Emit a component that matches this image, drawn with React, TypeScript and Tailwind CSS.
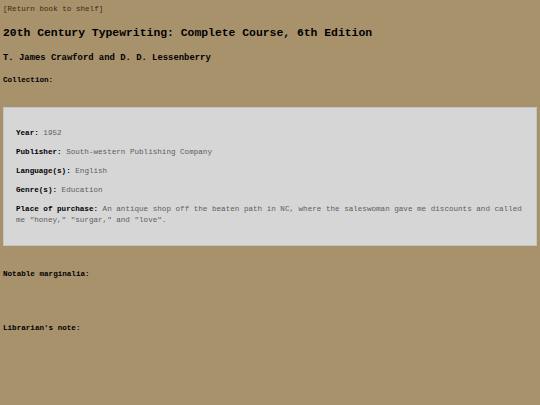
const mono = { fontFamily: '"Liberation Mono", "Courier New", monospace' }

const fields: { label: string; value: string }[] = [
  { label: 'Year', value: '1952' },
  { label: 'Publisher', value: 'South-western Publishing Company' },
  { label: 'Language(s)', value: 'English' },
  { label: 'Genre(s)', value: 'Education' },
  {
    label: 'Place of purchase',
    value:
      'An antique shop off the beaten path in NC, where the saleswoman gave me discounts and called me "honey," "surgar," and "love".',
  },
]

export default function App() {
  return (
    <div className="min-h-[405px] bg-[#a8926c] px-[3px] pt-[5px] text-black" style={mono}>
      <a href="#" className="block text-[7.6px] leading-[9px] text-[#3e2a10]">
        [Return book to shelf]
      </a>
      <h1 className="mt-[12px] text-[11.4px] font-bold leading-[14px]">
        20th Century Typewriting: Complete Course, 6th Edition
      </h1>
      <h2 className="mt-[12.5px] text-[8.9px] font-bold leading-[11px]">
        T. James Crawford and D. D. Lessenberry
      </h2>
      <div className="mt-[12px] text-[7.6px] font-bold leading-[9px]">Collection:</div>

      <div className="mt-[22.5px] h-[139px] border border-[#c4c4c4] bg-[#d6d6d6] px-[12px] pt-[19.5px]">
        <div className="flex flex-col gap-[8px]">
          {fields.map((f) => (
            <p key={f.label} className="text-[7.6px] leading-[11px]">
              <span className="font-bold text-black">{f.label}:</span>{' '}
              <span className="text-[#5e5e5e]">{f.value}</span>
            </p>
          ))}
        </div>
      </div>

      <div className="mt-[23.5px] text-[7.6px] font-bold leading-[9px]">Notable marginalia:</div>
      <div className="mt-[45px] text-[7.6px] font-bold leading-[9px]">Librarian's note:</div>
    </div>
  )
}
